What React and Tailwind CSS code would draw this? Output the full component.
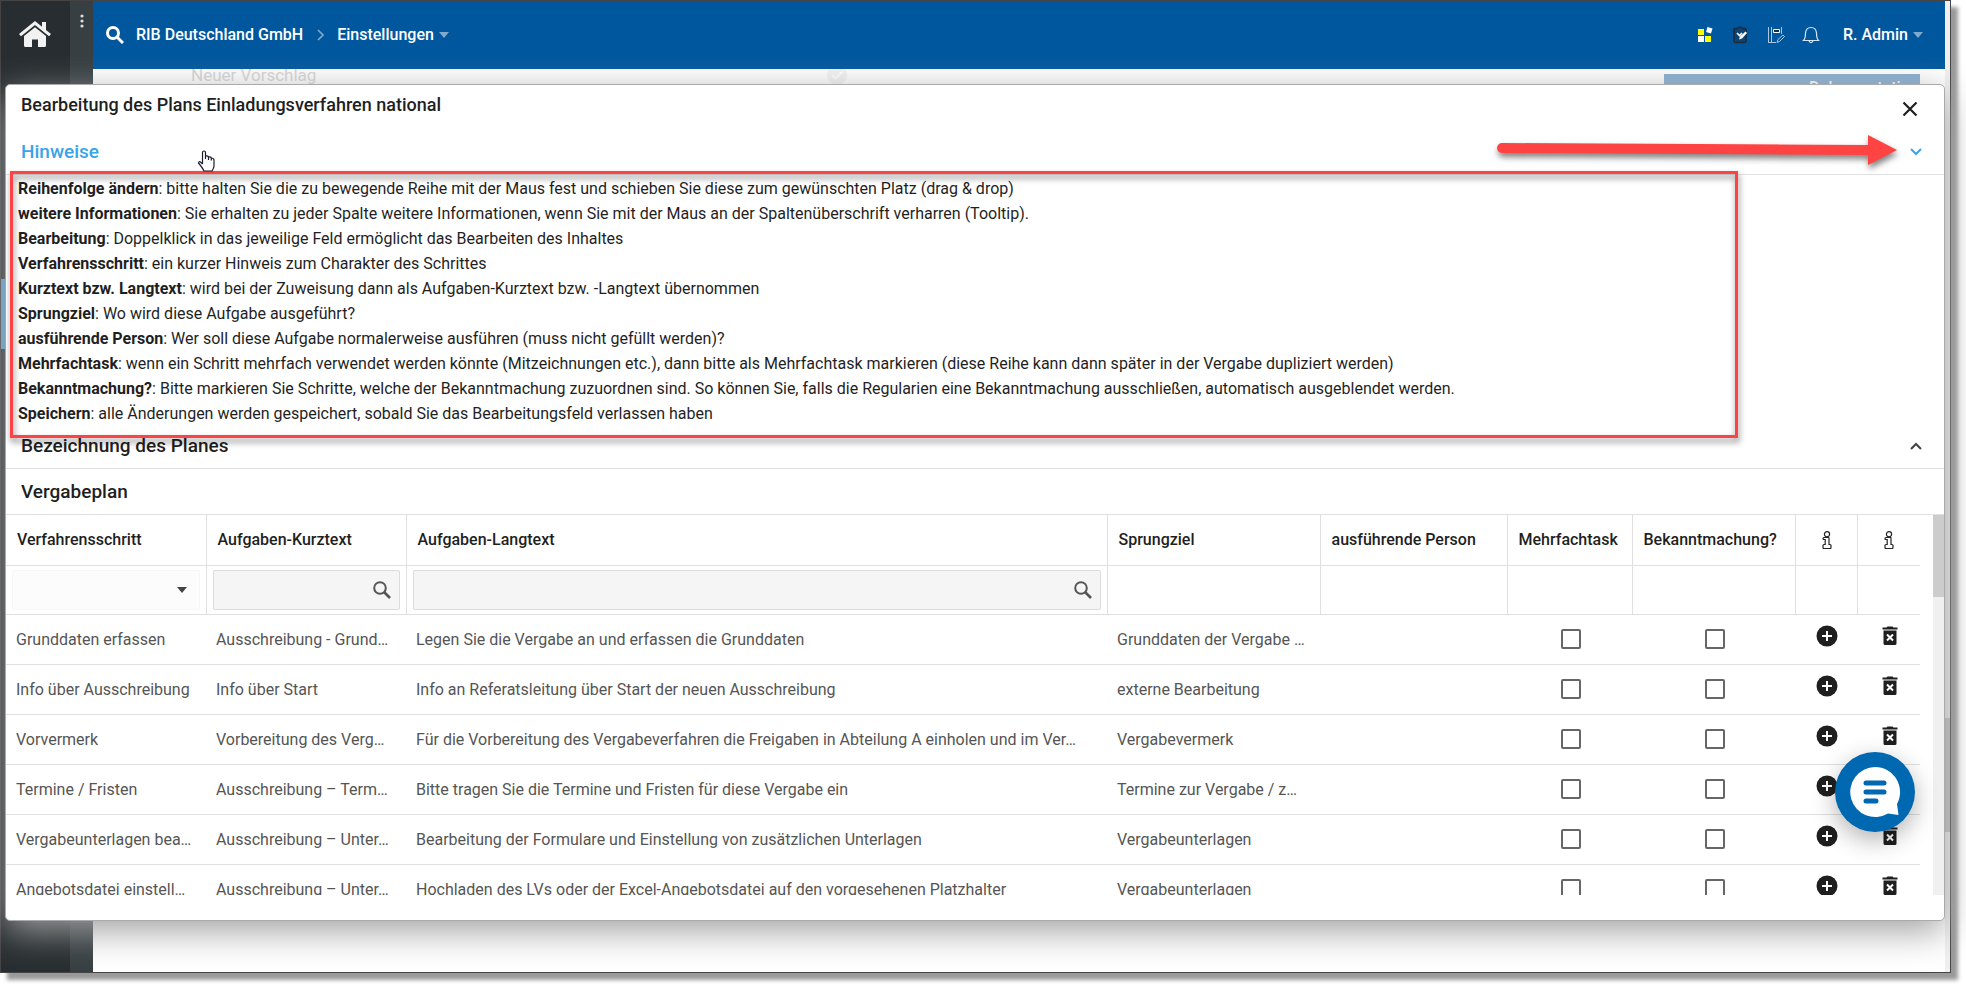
import { useState } from 'react';

const hints = [
    ['Reihenfolge ändern', 'bitte halten Sie die zu bewegende Reihe mit der Maus fest und schieben Sie diese zum gewünschten Platz (drag & drop)'],
    ['weitere Informationen', 'Sie erhalten zu jeder Spalte weitere Informationen, wenn Sie mit der Maus an der Spaltenüberschrift verharren (Tooltip).'],
    ['Bearbeitung', 'Doppelklick in das jeweilige Feld ermöglicht das Bearbeiten des Inhaltes'],
    ['Verfahrensschritt', 'ein kurzer Hinweis zum Charakter des Schrittes'],
    ['Kurztext bzw. Langtext', 'wird bei der Zuweisung dann als Aufgaben-Kurztext bzw. -Langtext übernommen'],
    ['Sprungziel', 'Wo wird diese Aufgabe ausgeführt?'],
    ['ausführende Person', 'Wer soll diese Aufgabe normalerweise ausführen (muss nicht gefüllt werden)?'],
    ['Mehrfachtask', 'wenn ein Schritt mehrfach verwendet werden könnte (Mitzeichnungen etc.), dann bitte als Mehrfachtask markieren (diese Reihe kann dann später in der Vergabe dupliziert werden)'],
    ['Bekanntmachung?', 'Bitte markieren Sie Schritte, welche der Bekanntmachung zuzuordnen sind. So können Sie, falls die Regularien eine Bekanntmachung ausschließen, automatisch ausgeblendet werden.'],
    ['Speichern', 'alle Änderungen werden gespeichert, sobald Sie das Bearbeitungsfeld verlassen haben'],
];

const rows = [
    ['Grunddaten erfassen', 'Ausschreibung - Grund…', 'Legen Sie die Vergabe an und erfassen die Grunddaten', 'Grunddaten der Vergabe …'],
    ['Info über Ausschreibung', 'Info über Start', 'Info an Referatsleitung über Start der neuen Ausschreibung', 'externe Bearbeitung'],
    ['Vorvermerk', 'Vorbereitung des Verg…', 'Für die Vorbereitung des Vergabeverfahren die Freigaben in Abteilung A einholen und im Ver…', 'Vergabevermerk'],
    ['Termine / Fristen', 'Ausschreibung – Term…', 'Bitte tragen Sie die Termine und Fristen für diese Vergabe ein', 'Termine zur Vergabe / z…'],
    ['Vergabeunterlagen bea…', 'Ausschreibung – Unter…', 'Bearbeitung der Formulare und Einstellung von zusätzlichen Unterlagen', 'Vergabeunterlagen'],
    ['Angebotsdatei einstell…', 'Ausschreibung – Unter…', 'Hochladen des LVs oder der Excel-Angebotsdatei auf den vorgesehenen Platzhalter', 'Vergabeunterlagen'],
];

const headers = ['Verfahrensschritt', 'Aufgaben-Kurztext', 'Aufgaben-Langtext', 'Sprungziel', 'ausführende Person', 'Mehrfachtask', 'Bekanntmachung?'];

const HomeIcon = () => (
    <svg width="32" height="26" viewBox="0 0 32 26" fill="#f2f2f2">
        <path d="M16 0 0 13l2 2.2L16 4l14 11.2L32 13l-5-4V1h-4v4.8z" />
        <path d="M16 6.2 5 15v9.500q0 1.500 1.500 1.500H13v-7.500h6V26h6.500q1.500 0 1.500-1.500V15z" />
    </svg>
);

const Caret = ({ className }) => (
    <svg className={className} width="10" height="6" viewBox="0 0 10 6" fill="currentColor"><path d="M0 0h10L5 6z" /></svg>
);

const SearchIcon = () => (
    <svg width="18" height="18" viewBox="0 0 18 18" fill="none" stroke="#555" strokeWidth="2">
        <circle cx="7" cy="7" r="5.800" />
        <path d="m11 11 6 6" strokeWidth="2.600" />
    </svg>
);

const InfoIcon = () => (
    <svg className="mx-auto" width="10" height="18" viewBox="0 0 10 18" fill="none" stroke="#222" strokeWidth="1.200">
        <circle cx="5" cy="3.200" r="2.600" />
        <path d="M1 7.500Q1 6.500 2 6.500h4.500q.5 0 .5.500v6.500h1q1 0 1 1v2q0 1-1 1H2q-1 0-1-1v-2q0-1 1-1h1.200v-5H2q-1 0-1-1z" />
    </svg>
);

const PlusIcon = () => (
    <svg width="22" height="22" viewBox="0 0 22 22">
        <circle cx="11" cy="11" r="10.500" fill="#1f1f1f" />
        <path d="M11 6v10M6 11h10" stroke="#fff" strokeWidth="2" />
    </svg>
);

const TrashIcon = () => (
    <svg width="16" height="20" viewBox="0 0 16 20">
        <path d="M.5 1.500h4L5.500.5h5l1 1h4v2H.5zM1.500 4.500h13v13q0 1.500-1.500 1.500H3q-1.500 0-1.500-1.500z" fill="#1f1f1f" />
        <path d="m5 8.500 6 6m0-6-6 6" stroke="#fff" strokeWidth="2" />
    </svg>
);

const Sidebar = () => (
    <aside className="flex w-[92px] shrink-0 bg-[#272d30]">
        <a href="#home" aria-label="Start" className="flex w-[69px] justify-center pr-px pt-5"><HomeIcon /></a>
        <div className="flex flex-1 justify-center bg-[#373f43] pt-[13px]">
            <svg width="4" height="14" viewBox="0 0 4 14" fill="#ddd">
                <circle cx="2" cy="2" r="1.600" /><circle cx="2" cy="7" r="1.600" /><circle cx="2" cy="12" r="1.600" />
            </svg>
        </div>
    </aside>
);

const TopBar = () => (
    <header className="flex h-[68px] items-center bg-[#00579d] pl-[13px] pr-[22px] text-base font-medium text-white">
        <svg width="18" height="18" viewBox="0 0 18 18" fill="none" stroke="#fff" strokeWidth="3">
            <circle cx="7" cy="7" r="5.500" /><path d="m11 11 6 6" />
        </svg>
        <a href="#firma" className="ml-3">RIB Deutschland GmbH</a>
        <svg className="ml-[14px] mr-[13px]" width="7" height="12" viewBox="0 0 7 12" fill="none" stroke="#7fa9cd" strokeWidth="1.600"><path d="m1 1 5 5-5 5" /></svg>
        <button className="flex items-center gap-[5px]">Einstellungen<Caret className="text-[#7fa9cd]" /></button>
        <div className="ml-auto flex items-center gap-[17px]">
            <svg width="18" height="18" viewBox="0 0 18 18">
                <path d="M1 3h6v6H1zM8 10h6v6H8z" fill="#ff0" />
                <path d="M1 10h6v6H1z" fill="#fff" />
                <path d="m10.500 1 5 1.500-1.500 5-5-1.500z" fill="#fff" />
            </svg>
            <svg width="18" height="18" viewBox="0 0 18 18">
                <path d="M3 2.500h2.500q2.500-3 5 0H13q1 0 1 1v11q0 2-2 2H4q-2 0-2-2v-11q0-1 1-1z" fill="#0d4478" stroke="#1c2b3a" strokeWidth="1.600" />
                <path d="m5 7 2.500 2.500L10 7" stroke="#fff" strokeWidth="1.600" fill="none" />
                <path d="m7 13.500 1-3 5.500-5 1.500 1.500-5 5.500z" fill="#fff" />
            </svg>
            <svg width="18" height="18" viewBox="0 0 18 18" fill="none" stroke="#a9c7e0">
                <path d="M1.500 1v16M4.500 1v16M1 16.500h8M14.500 1v7" />
                <path d="M6.500 3.500h6v3h-6z" fill="#1c2b3a" stroke="#fff" />
                <path d="m10 16.500 1-3 5-4.500 1.500 1.500-5 5z" />
            </svg>
            <svg width="18" height="18" viewBox="0 0 18 18" fill="none" stroke="#d6e4f0" strokeWidth="1.200">
                <path d="M1.500 14.500Q3.500 12.500 3.500 7 4 1.500 9 1.500T14.500 7q0 5.500 2 7.500zM7 15q2 3.500 4 0" />
            </svg>
            <button className="ml-[6px] flex items-center gap-[5px]">R. Admin<Caret className="text-[#7fa9cd]" /></button>
        </div>
    </header>
);

const PlanTable = () => (
    <table className="w-full table-fixed border-collapse text-left text-base text-[#555]">
        <colgroup>
            <col className="w-[200px]" /><col className="w-[200px]" /><col /><col className="w-[213px]" />
            <col className="w-[187px]" /><col className="w-[125px]" /><col className="w-[163px]" /><col className="w-[62px]" /><col className="w-[63px]" />
        </colgroup>
        <thead>
            <tr className="h-[50px] border-b border-[#e0e0e0] text-[#1f1f1f]">
                {headers.map((h) => (
                    <th key={h} className="whitespace-nowrap border-r border-[#e0e0e0] pl-[11px] font-medium">{h}</th>
                ))}
                <th className="border-r border-[#e0e0e0] pl-px"><InfoIcon /></th>
                <th className="pl-px"><InfoIcon /></th>
            </tr>
            <tr className="h-[49px] border-b border-[#e0e0e0]">
                <td className="border-r border-[#e0e0e0] px-[6px]">
                    <div className="flex h-10 items-center rounded-xs border border-[#f7f7f7] bg-[#fcfcfc] pr-3">
                        <select aria-label="Verfahrensschritt" className="w-0 flex-1 appearance-none bg-transparent outline-none"><option></option></select>
                        <Caret className="text-[#444]" />
                    </div>
                </td>
                {['Aufgaben-Kurztext', 'Aufgaben-Langtext'].map((label) => (
                    <td key={label} className="border-r border-[#e0e0e0] px-[6px]">
                        <div className="flex h-10 items-center rounded-xs border border-[#dcdcdc] bg-[#f5f5f5] pr-2">
                            <input type="text" aria-label={label} className="w-0 flex-1 bg-transparent px-2 outline-none" />
                            <SearchIcon />
                        </div>
                    </td>
                ))}
                <td className="border-r border-[#e0e0e0]" /><td className="border-r border-[#e0e0e0]" /><td className="border-r border-[#e0e0e0]" />
                <td className="border-r border-[#e0e0e0]" /><td className="border-r border-[#e0e0e0]" /><td />
            </tr>
        </thead>
        <tbody>
            {rows.map((row, i) => (
                <tr key={i} className="h-[50px] border-b border-[#e0e0e0]">
                    {row.map((text, j) => (
                        <td key={j} className="whitespace-nowrap pl-[10px] pt-[2px]">{text}</td>
                    ))}
                    <td />
                    {['Mehrfachtask', 'Bekanntmachung'].map((label) => (
                        <td key={label} className="pl-[2px]">
                            <input type="checkbox" aria-label={label} className="mx-auto block size-5 appearance-none rounded-xs border-2 border-[#666] bg-white" />
                        </td>
                    ))}
                    <td className="pl-[2px]"><button aria-label="Zeile hinzufügen" className="mx-auto block pb-[6px]"><PlusIcon /></button></td>
                    <td className="pl-[2px]"><button aria-label="Zeile löschen" className="mx-auto block pb-[6px]"><TrashIcon /></button></td>
                </tr>
            ))}
        </tbody>
    </table>
);

const PlanDialog = () => {
    const [open, setOpen] = useState(true);

    return (
        <div role="dialog" aria-label="Bearbeitung des Plans" className="absolute left-1 right-[5px] top-[83px] rounded-[5px] border border-[#aaa] bg-white pb-[25px] shadow-[0_10px_36px_#a0a0a0]">
            <div className="flex h-11 items-start justify-between pl-[15px] pr-[26px] pt-2">
                <h1 className="text-lg leading-6 font-medium">Bearbeitung des Plans Einladungsverfahren national</h1>
                <button aria-label="Schließen" className="pt-2">
                    <svg width="16" height="16" viewBox="0 0 16 16" stroke="#1f1f1f" strokeWidth="2.200"><path d="m1.500 1.500 13 13m0-13-13 13" /></svg>
                </button>
            </div>

            <button onClick={() => setOpen(!open)} className="flex h-[46px] w-full items-center justify-between border-b border-[#e0e0e0] pl-[15px] pr-[22px] pt-px text-[19px] font-medium text-[#3ba3e8]">
                Hinweise
                <svg width="12" height="8" viewBox="0 0 12 8" fill="none" stroke="currentColor" strokeWidth="2"><path d="m1 1 5 5 5-5" /></svg>
            </button>
            {open && (
                <ul className="relative h-[249px] pl-3 pt-px text-base leading-[25px]">
                    {hints.map(([name, text]) => (
                        <li key={name}><b>{name}</b>: {text}</li>
                    ))}
                    {/* frame around the hints */}
                    <li aria-hidden="true" className="absolute -top-1 left-1 right-[206px] h-[267px] border-3 border-[#ff4343] drop-shadow-[1px_4px_3px_rgba(0,0,0,0.5)]" />
                </ul>
            )}

            <button className="flex h-[45px] w-full items-center justify-between border-b border-[#e0e0e0] pl-[15px] pr-[22px] text-[19px] font-medium">
                Bezeichnung des Planes
                <svg width="12" height="8" viewBox="0 0 12 8" fill="none" stroke="#444" strokeWidth="2"><path d="m1 7 5-5 5 5" /></svg>
            </button>
            <h2 className="flex h-[46px] items-center border-b border-[#e0e0e0] pl-[15px] pt-px text-[19px] font-medium">Vergabeplan</h2>

            <div className="flex h-[380px] overflow-hidden">
                <div className="mr-[13px] min-w-0 flex-1"><PlanTable /></div>
                <div className="w-[11px] bg-[#f0f0f0]"><div className="h-[82px] bg-[#ccc]" /></div>
            </div>
        </div>
    );
};

const App = () => (
    <div className="h-screen overflow-hidden bg-white pb-[15px] pr-[15px] font-['Roboto',sans-serif] text-[#1f1f1f]">
        <div className="relative h-full border border-[#444] shadow-[7px_7px_4px_rgba(0,0,0,0.4)]">
            <div className="flex h-full overflow-hidden">
                <Sidebar />
                <main className="min-w-0 flex-1 bg-white">
                    <TopBar />
                    <div className="flex h-8 items-start overflow-hidden pl-[98px] pr-[25px]">
                        <span className="-mt-[6px] text-[17px] leading-6 text-[#d6d6d6]">Neuer Vorschlag</span>
                        <svg className="-mt-1 ml-[511px]" width="20" height="20" viewBox="0 0 20 20">
                            <circle cx="10" cy="10" r="10" fill="#f3f3f3" /><path d="m5 10 3.500 3.500 7-7" fill="none" stroke="#fff" strokeWidth="2" />
                        </svg>
                        <button className="ml-auto mt-[5px] h-7 w-64 bg-[#84add0] pl-[145px] text-left text-base font-medium text-white">Dokumentation</button>
                    </div>
                </main>
                <div className="w-[5px] bg-[#f0f0f0] pt-[717px]"><div className="h-[114px] bg-[#c1c1c1]" /></div>
            </div>

            <span className="absolute left-0 top-[278px] h-[70px] w-1 bg-[#5aa9dc]" />
            <PlanDialog />

            {/* arrow pointing to the toggle */}
            <svg className="absolute right-[52px] top-[130px] drop-shadow-[1px_4px_3px_rgba(0,0,0,0.5)]" width="402" height="36" viewBox="0 0 402 36" fill="#ff4343">
                <path d="M6 12 372 14V4l29 15-29 15V24L6 22a5 5 0 0 1 0-10z" />
            </svg>
            {/* hand cursor */}
            <svg className="absolute left-[196px] top-[149px]" width="19" height="22" viewBox="0 0 19 22" fill="#fff" stroke="#1c1c2c" strokeWidth="1.200">
                <path d="M5.500 14V2.500q0-1.500 1.500-1.500t1.500 1.500V9M8.500 9V6q3-.5 3 1.500V10M11.500 7q2.800-.5 2.800 1.500v2M14.300 8q2.700 0 2.700 2v6q0 2-2 5H7q-1-2.500-5.500-8Q2 11 3.500 12l2 2" />
            </svg>

            <button aria-label="Chat" className="absolute bottom-[140px] right-[35px] flex size-20 items-center justify-center rounded-full bg-[#0067b1] shadow-[0_8px_24px_rgba(0,0,0,0.3)]">
                <svg width="52" height="52" viewBox="0 0 52 52">
                    <path d="M26 1a25 25 0 1 0 13 46.500l10.500 1.500-1.500-11A25 25 0 0 0 26 1z" fill="#fff" />
                    <path d="M17 17h18M17 26h18M17 35h10" stroke="#0067b1" strokeWidth="5" strokeLinecap="round" />
                </svg>
            </button>
        </div>
    </div>
);

export default App;
